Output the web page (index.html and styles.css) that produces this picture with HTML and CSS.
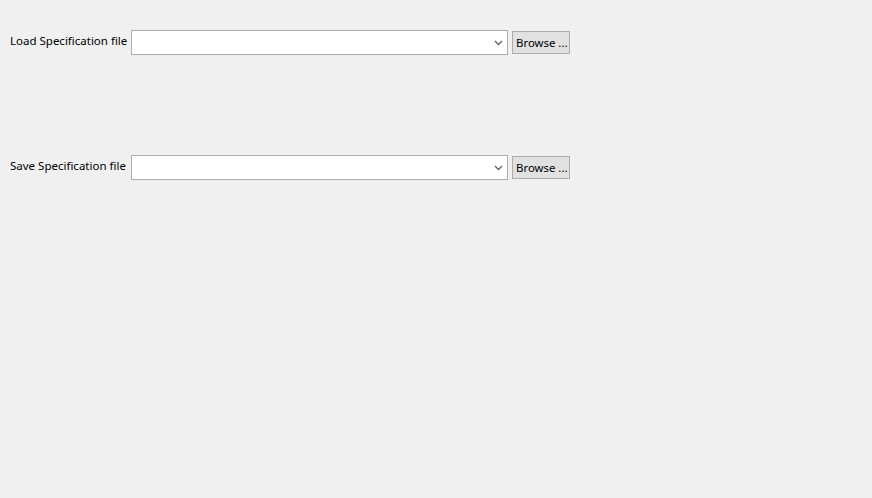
FILE: index.html
```html
<!DOCTYPE html>
<html>
<head>
<meta charset="utf-8">
<link rel="stylesheet" href="styles.css">
</head>
<body>
<div class="form">
  <div class="row">
    <label class="label">Load Specification file</label>
    <div class="combo"><span class="arrow"><svg width="9" height="6" viewBox="0 0 9 6"><path d="M1 1 L4.5 4.5 L8 1" fill="none" stroke="#606060" stroke-width="1.3"/></svg></span></div>
    <button class="btn">Browse ...</button>
  </div>
  <div class="row">
    <label class="label">Save Specification file</label>
    <div class="combo"><span class="arrow"><svg width="9" height="6" viewBox="0 0 9 6"><path d="M1 1 L4.5 4.5 L8 1" fill="none" stroke="#606060" stroke-width="1.3"/></svg></span></div>
    <button class="btn">Browse ...</button>
  </div>
</div>
</body>
</html>
```

FILE: styles.css
```css
html, body {
  margin: 0;
  padding: 0;
  background: #f0f0f0;
  width: 872px;
  height: 498px;
  overflow: hidden;
}
.form {
  display: grid;
  grid-template-columns: 116px 377px 58px;
  column-gap: 5px;
  row-gap: 100px;
  padding: 30px 0 0 10px;
  font-family: "Noto Sans", "Open Sans", sans-serif;
  font-size: 11.5px;
  color: #000;
}
.row {
  display: contents;
}
.label {
  align-self: center;
  white-space: nowrap;
  line-height: 16px;
  margin-top: -3px;
}
.combo {
  height: 23px;
  border: 1px solid #adadad;
  background: #fff;
  display: flex;
  align-items: center;
  justify-content: flex-end;
}
.arrow {
  display: flex;
  margin-right: 4px;
}
.btn {
  align-self: center;
  justify-self: start;
  margin-left: -1px;
  width: 58px;
  height: 23px;
  border: 1px solid #adadad;
  background: #e1e1e1;
  font-family: "Noto Sans", "Open Sans", sans-serif;
  font-size: 11.4px;
  color: #000;
  padding: 0 0 0 3px;
  text-align: left;
  line-height: 19px;
  white-space: nowrap;
  overflow: hidden;
}
```
